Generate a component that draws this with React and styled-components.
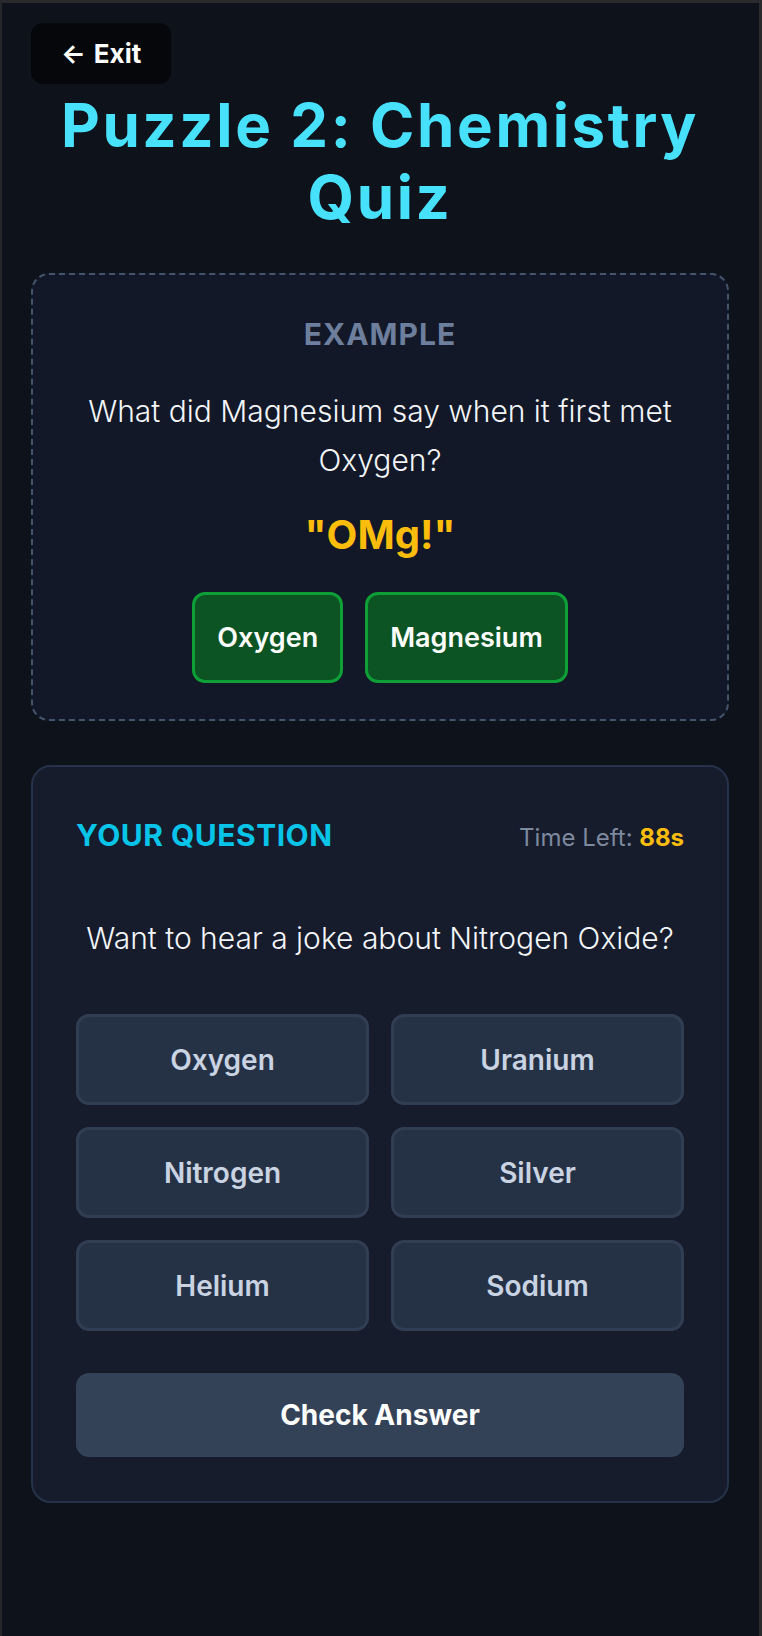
import React, { useState } from 'react';
import styled, { createGlobalStyle, css } from 'styled-components';

const GlobalStyle = createGlobalStyle`
  * {
    box-sizing: border-box;
  }

  html,
  body {
    margin: 0;
    padding: 0;
    background: #0e121b;
  }

  body {
    font-family: Inter, 'Noto Sans', sans-serif;
    -webkit-font-smoothing: antialiased;
  }
`;

const Page = styled.div`
  min-height: 100vh;
  background: #0e121b;
  border-top: 3px solid #2a2a2c;
  border-left: 2px solid #242528;
  border-right: 3px solid #2a2a2c;
  padding: 20px 30px 60px 29px;
`;

const ExitButton = styled.button`
  display: inline-flex;
  align-items: center;
  gap: 8px;
  height: 61px;
  padding: 0 30px 0 30px;
  border: 0;
  border-radius: 12px;
  background: #05070b;
  color: #fff;
  font-family: inherit;
  font-size: 26px;
  font-weight: 700;
  cursor: pointer;
`;

const Title = styled.h1`
  margin: 5px 0 40px;
  text-align: center;
  color: #48e1fb;
  font-size: 60px;
  font-weight: 700;
  line-height: 72px;
  letter-spacing: 2.6px;
`;

const ExampleCard = styled.section`
  border: 2px dashed #44546d;
  border-radius: 18px;
  background: #121827;
  padding: 37px 40px 36px;
  text-align: center;
`;

const Label = styled.h2`
  margin: 0;
  font-size: 30px;
  font-weight: 700;
  line-height: 45px;
  letter-spacing: ${({ tone }) => (tone === 'accent' ? '0.5px' : '1px')};
  color: ${({ tone }) => (tone === 'accent' ? '#08c4e8' : '#6d7f9c')};
`;

const Prompt = styled.p`
  margin: ${({ gap }) => gap}px 0 0;
  font-size: 30px;
  font-weight: 300;
  line-height: 48.75px;
  color: #f3f5f9;
  text-align: center;
`;

const Punchline = styled.div`
  margin-top: 20px;
  font-size: 40px;
  font-weight: 700;
  line-height: 60px;
  color: #fbbd0b;
`;

const ChipRow = styled.div`
  display: flex;
  justify-content: center;
  gap: 22px;
  margin-top: 27px;
`;

const Chip = styled.div`
  display: flex;
  align-items: center;
  height: 91px;
  padding: 0 22px;
  border: 3px solid #0f9f37;
  border-radius: 13px;
  background: #0c5424;
  color: #fff;
  font-size: 27px;
  font-weight: 600;
`;

const QuestionCard = styled.section`
  margin-top: 44px;
  border: 2px solid #263249;
  border-radius: 20px;
  background: #161c2b;
  padding: 46px 43px 44px;
`;

const Header = styled.div`
  display: flex;
  justify-content: space-between;
  align-items: baseline;
`;

const Timer = styled.div`
  font-size: 24px;
  font-weight: 400;
  color: #7d899e;

  b {
    font-weight: 700;
    color: #fbbd0b;
  }
`;

const Options = styled.div`
  display: grid;
  grid-template-columns: 1fr 1fr;
  gap: 22px;
  margin-top: 52px;
`;

const Option = styled.button`
  height: 91px;
  border: 3px solid #303d53;
  border-radius: 13px;
  background: #253246;
  color: #c9d3e2;
  font-family: inherit;
  font-size: 28px;
  font-weight: 600;
  cursor: pointer;

  ${({ selected }) =>
    selected &&
    css`
      border-color: #08c4e8;
      color: #fff;
    `}
`;

const CheckButton = styled.button`
  display: block;
  width: 100%;
  height: 84px;
  margin-top: 42px;
  border: 0;
  border-radius: 13px;
  background: #344258;
  color: #fff;
  font-family: inherit;
  font-size: 28px;
  font-weight: 700;
  cursor: pointer;
`;

const options = ['Oxygen', 'Uranium', 'Nitrogen', 'Silver', 'Helium', 'Sodium'];

const App = () => {
  const [picked, setPicked] = useState([]);

  const toggle = (name) =>
    setPicked((list) =>
      list.includes(name) ? list.filter((el) => el !== name) : [...list, name]
    );

  return (
    <Page>
      <GlobalStyle />
      <ExitButton>
        <span>←</span>
        <span>Exit</span>
      </ExitButton>
      <Title>
        Puzzle 2: Chemistry
        <br />
        Quiz
      </Title>

      <ExampleCard>
        <Label>EXAMPLE</Label>
        <Prompt gap={30}>
          What did Magnesium say when it first met
          <br />
          Oxygen?
        </Prompt>
        <Punchline>"OMg!"</Punchline>
        <ChipRow>
          <Chip>Oxygen</Chip>
          <Chip>Magnesium</Chip>
        </ChipRow>
      </ExampleCard>

      <QuestionCard>
        <Header>
          <Label tone="accent">YOUR QUESTION</Label>
          <Timer>
            Time Left: <b>88s</b>
          </Timer>
        </Header>
        <Prompt gap={56}>Want to hear a joke about Nitrogen Oxide?</Prompt>
        <Options>
          {options.map((name) => (
            <Option key={name} selected={picked.includes(name)} onClick={() => toggle(name)}>
              {name}
            </Option>
          ))}
        </Options>
        <CheckButton>Check Answer</CheckButton>
      </QuestionCard>
    </Page>
  );
};

export default App;
